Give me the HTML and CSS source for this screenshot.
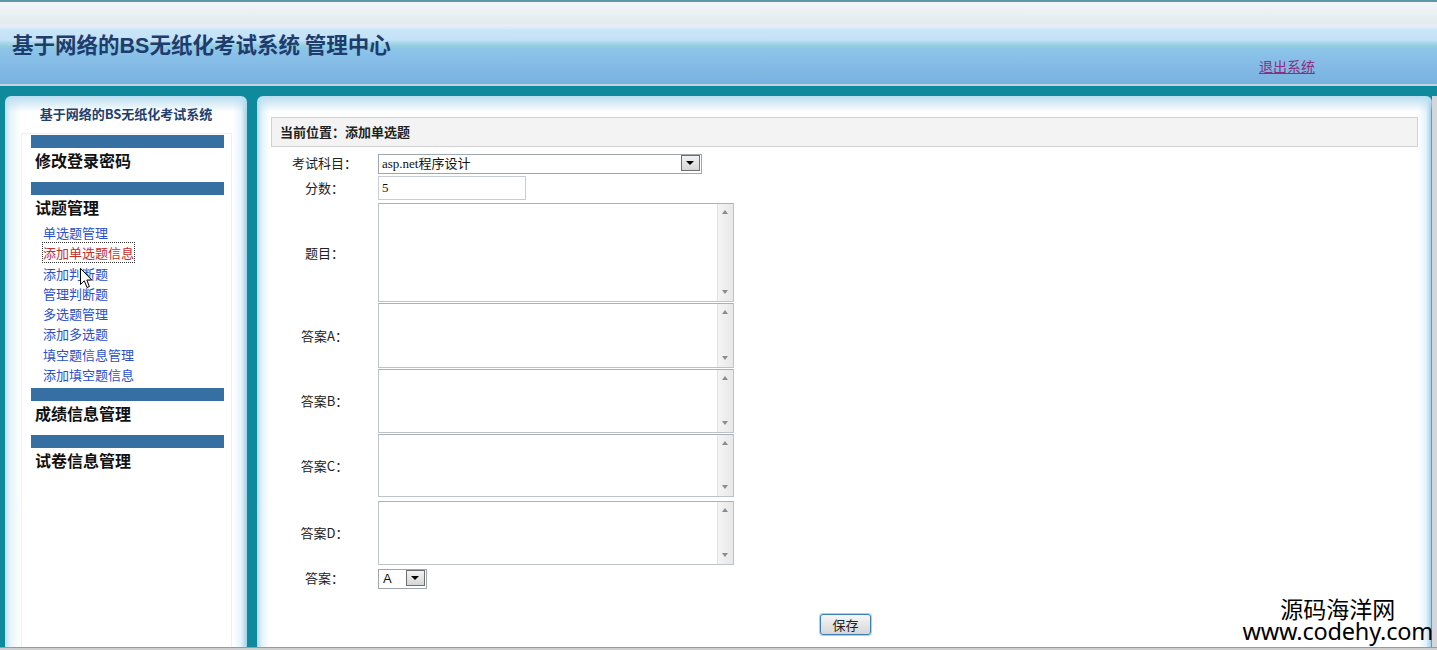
FILE: index.html
```html
<!DOCTYPE html>
<html lang="zh-CN">
<head>
<meta charset="utf-8">
<title>基于网络的BS无纸化考试系统 管理中心</title>
<link rel="stylesheet" href="styles.css">
</head>
<body>
<div class="page">
  <header class="top">
    <h1 class="brand">基于网络的<span class="bs">BS</span>无纸化考试系统 管理中心</h1>
    <div class="top-links"><a href="#" class="logout">退出系统</a></div>
  </header>

  <div class="panels">
    <aside class="side">
      <div class="side-title">基于网络的BS无纸化考试系统</div>
      <nav class="side-body">
        <div class="menu-bar"></div>
        <div class="menu-head">修改登录密码</div>
        <div class="menu-gap"></div>

        <div class="menu-bar"></div>
        <div class="menu-head">试题管理</div>
        <ul class="menu-sub">
          <li><a href="#">单选题管理</a></li>
          <li><a href="#" class="current">添加单选题信息</a></li>
          <li><a href="#">添加判断题</a></li>
          <li><a href="#">管理判断题</a></li>
          <li><a href="#">多选题管理</a></li>
          <li><a href="#">添加多选题</a></li>
          <li><a href="#">填空题信息管理</a></li>
          <li><a href="#">添加填空题信息</a></li>
        </ul>

        <div class="menu-bar"></div>
        <div class="menu-head">成绩信息管理</div>
        <div class="menu-gap"></div>

        <div class="menu-bar"></div>
        <div class="menu-head">试卷信息管理</div>
      </nav>
      <svg class="cursor" width="13" height="21" viewBox="0 0 13 21">
        <path d="M0.5 0.5 L0.5 16.5 L4.3 12.8 L7 19.5 L9.4 18.5 L6.8 12 L11.8 12 Z" fill="#fff" stroke="#000" stroke-width="1"/>
      </svg>
    </aside>

    <main class="main">
      <div class="crumb">当前位置：添加单选题</div>
      <form class="qform">
        <div class="row">
          <label class="lbl">考试科目：</label>
          <div class="field">
            <span class="sel sel-wide"><select><option>asp.net程序设计</option></select></span>
          </div>
        </div>
        <div class="row">
          <label class="lbl">分数：</label>
          <div class="field"><input class="txt" type="text" value="5"></div>
        </div>
        <div class="row row-q">
          <label class="lbl">题目：</label>
          <div class="field"><div class="area-box"><textarea class="area area-q"></textarea><span class="vscroll"></span></div></div>
        </div>
        <div class="row row-opt">
          <label class="lbl">答案A：</label>
          <div class="field"><div class="area-box"><textarea class="area area-a"></textarea><span class="vscroll"></span></div></div>
        </div>
        <div class="row row-opt">
          <label class="lbl">答案B：</label>
          <div class="field"><div class="area-box"><textarea class="area area-b"></textarea><span class="vscroll"></span></div></div>
        </div>
        <div class="row row-opt">
          <label class="lbl">答案C：</label>
          <div class="field"><div class="area-box"><textarea class="area area-c"></textarea><span class="vscroll"></span></div></div>
        </div>
        <div class="row row-d">
          <label class="lbl">答案D：</label>
          <div class="field"><div class="area-box"><textarea class="area area-d"></textarea><span class="vscroll"></span></div></div>
        </div>
        <div class="row">
          <label class="lbl">答案：</label>
          <div class="field">
            <span class="sel sel-small"><select><option>A</option><option>B</option><option>C</option><option>D</option></select></span>
          </div>
        </div>
        <div class="actions"><button type="button" class="btn">保存</button></div>
      </form>
    </main>
    <div class="edge"></div>
  </div>
  <div class="foot-line"></div>

  <div class="watermark">
    <div class="wm-cn">源码海洋网</div>
    <div class="wm-url">www.codehy.com</div>
  </div>
</div>
</body>
</html>
```

FILE: styles.css
```css
html, body {
  margin: 0;
  padding: 0;
}
body {
  background: #0f8a9c;
  font-family: "Noto Sans CJK SC", "Noto Sans", sans-serif;
  font-size: 13px;
  color: #222;
}
.page {
  position: relative;
  width: 1437px;
  height: 650px;
  overflow: hidden;
  display: flex;
  flex-direction: column;
}

/* ---------- header ---------- */
.top {
  box-sizing: border-box;
  height: 86px;
  border-top: 2px solid #5a97a8;
  padding-top: 29px;
  background: linear-gradient(to bottom,
    #f2f6f9 0, #e2eaee 22px, #ecedf6 23px, #d9ecf8 26px, #c9e5f8 28px,
    #c4e2f6 38px, #a9d4ea 41px, #92cedc 44px, #8cc4ea 47px,
    #79b1e0 82px, #c4d4dc 82px, #c4d4dc 84px);
}
.brand {
  margin: 0;
  padding-left: 12px;
  font-size: 21.5px;
  line-height: 26px;
  font-weight: bold;
  color: #1e3c6c;
}
.bs {
  font-family: "Liberation Sans", sans-serif;
  font-weight: bold;
}
.top-links {
  margin-top: -2px;
  line-height: 18px;
  text-align: right;
  padding-right: 122px;
}
.logout {
  font-size: 14px;
  color: #8c2f84;
  text-decoration: underline;
}

/* ---------- panels ---------- */
.panels {
  display: flex;
  padding: 10px 0 0 5px;
  box-sizing: border-box;
  height: 561px;
}
.side {
  position: relative;
  width: 242px;
  flex: none;
  border-radius: 6px 6px 0 0;
  background:
    linear-gradient(to bottom, #b9ddf0 0, rgba(255,255,255,0) 16px),
    linear-gradient(to right, #bfe0f2 0, #e6f4fb 5px, #fbfdfe 14px, #fff 17px,
      #fff calc(100% - 14px), #e6f4fb calc(100% - 6px), #a3d0ea 100%);
  margin-right: 10px;
}
.side-title {
  padding-top: 9px;
  height: 28px;
  line-height: 18px;
  text-align: center;
  font-size: 13px;
  font-weight: bold;
  color: #22406e;
}
.side-body {
  box-sizing: border-box;
  margin: 0 15px 0 16px;
  height: calc(100% - 37px);
  border: 1px solid #e9f2f7;
  border-bottom: none;
  background: #fff;
  padding: 1px 7px 0 9px;
}
.menu-bar {
  height: 13px;
  background: #3670a2;
}
.menu-head {
  height: 24px;
  line-height: 24px;
  padding-left: 4px;
  font-size: 16px;
  font-weight: bold;
  color: #111;
}
.menu-gap {
  height: 10px;
}
.menu-sub {
  list-style: none;
  margin: 0;
  padding: 4px 0 3px 12px;
}
.menu-sub li {
  line-height: 20.3px;
  height: 20.3px;
}
.menu-sub a {
  font-size: 13px;
  color: #2a50c8;
  text-decoration: none;
}
.menu-sub a.current {
  color: #c0302c;
  outline: 1px dotted #333;
  outline-offset: 0;
}
.cursor {
  position: absolute;
  left: 75px;
  top: 172px;
}

.main {
  position: relative;
  flex: none;
  width: 1175px;
  box-sizing: border-box;
  padding: 21px 14px 0 14px;
  border-radius: 6px 6px 0 0;
  background:
    linear-gradient(to bottom, #b9ddf0 0, rgba(255,255,255,0) 16px),
    linear-gradient(to right, #b3d9ee 0, #e4f3fa 5px, #fcfeff 12px, #fff 14px,
      #fff calc(100% - 14px), #e4f3fa calc(100% - 6px), #a3d0ea calc(100% - 1px), #0e7080 100%);
}
.edge {
  flex: 1;
  background: #d3d7da;
}
.foot-line {
  height: 2px;
  border-top: 1px solid #9a9a9a;
  background: #cfcfcf;
}

/* ---------- breadcrumb ---------- */
.crumb {
  box-sizing: border-box;
  height: 30px;
  line-height: 28px;
  padding-left: 8px;
  background: #f3f3f3;
  border: 1px solid #d2d2d2;
  font-size: 13px;
  font-weight: bold;
  color: #222;
}

/* ---------- form ---------- */
.qform {
  padding-top: 4.5px;
}
.row {
  display: grid;
  grid-template-columns: 107px auto;
  align-items: center;
  padding: 1.5px 0;
}
.row-q {
  padding: 1.5px 0 0.5px;
}
.row-opt {
  padding: 0.5px 0;
}
.row-d {
  padding: 3px 0 1.5px;
}
.lbl {
  text-align: center;
  font-size: 13px;
  color: #222;
  line-height: 16px;
}
.field {
  display: flex;
  align-items: center;
}

.sel {
  position: relative;
  display: inline-block;
  height: 20px;
}
.sel select {
  appearance: none;
  -webkit-appearance: none;
  box-sizing: border-box;
  width: 100%;
  height: 20px;
  margin: 0;
  padding: 0 0 0 3px;
  border: 1px solid #9ea6ae;
  border-radius: 0;
  background: #fff;
  font-family: "Liberation Serif", "Noto Sans CJK SC", serif;
  font-size: 13px;
  color: #111;
  line-height: 18px;
}
.sel::after {
  content: "";
  position: absolute;
  right: 2px;
  top: 2px;
  width: 17px;
  height: 14px;
  border: 1px solid #6f6f6f;
  background: linear-gradient(to bottom, #f2f2f2, #d6d6d6);
  pointer-events: none;
}
.sel::before {
  content: "";
  position: absolute;
  right: 8px;
  top: 8px;
  width: 0;
  height: 0;
  border-left: 4px solid transparent;
  border-right: 4px solid transparent;
  border-top: 4px solid #000;
  z-index: 1;
  pointer-events: none;
}
.sel-wide { width: 324px; }
.sel-small { width: 49px; }
.sel-small select {
  font-family: "Liberation Sans", sans-serif;
  padding-left: 4px;
}

.txt {
  box-sizing: border-box;
  width: 148px;
  height: 24px;
  margin: 0;
  padding: 0 3px;
  border: 1px solid #c6ccd2;
  font-family: "Liberation Serif", serif;
  font-size: 13px;
  color: #111;
}

.area-box {
  position: relative;
  width: 356px;
}
.area {
  box-sizing: border-box;
  display: block;
  width: 356px;
  margin: 0;
  padding: 2px 20px 2px 2px;
  border: 1px solid #bcc3ca;
  border-top-color: #a9b2bb;
  resize: none;
  overflow: hidden;
  background: #fff;
  font-size: 13px;
}
.vscroll {
  position: absolute;
  right: 1px;
  top: 1px;
  bottom: 1px;
  width: 16px;
  box-sizing: border-box;
  border-left: 1px solid #e2e2e2;
  background: linear-gradient(to right, #f4f4f4, #e8e8e8);
}
.vscroll::before,
.vscroll::after {
  content: "";
  position: absolute;
  left: 4px;
  width: 0;
  height: 0;
  border-left: 3.5px solid transparent;
  border-right: 3.5px solid transparent;
}
.vscroll::before {
  top: 6px;
  border-bottom: 4px solid #8c8c8c;
}
.vscroll::after {
  bottom: 7px;
  border-top: 4px solid #8c8c8c;
}
.area-q { height: 99px; }
.area-a { height: 65px; }
.area-b { height: 64px; }
.area-c { height: 63px; }
.area-d { height: 64px; }

.actions {
  margin-top: 25px;
  text-align: center;
}
.btn {
  box-sizing: border-box;
  width: 51px;
  height: 21px;
  margin-left: 2px;
  padding: 0;
  border: 1px solid #3c7fb1;
  border-radius: 3px;
  background: linear-gradient(to bottom, #f6f6f6 0, #e6e6e6 50%, #d6d6d6 100%);
  box-shadow: 0 0 0 1px #a6d4ee;
  font-family: "Noto Sans CJK SC", sans-serif;
  font-size: 13px;
  line-height: 19px;
  color: #222;
}

/* ---------- watermark ---------- */
.watermark {
  position: absolute;
  right: 4px;
  bottom: 7px;
  text-align: center;
  color: #000;
}
.wm-cn {
  font-family: "Noto Sans CJK SC", sans-serif;
  font-size: 23px;
  line-height: 23px;
}
.wm-url {
  font-family: "Noto Sans", sans-serif;
  font-size: 23.5px;
  line-height: 23px;
  letter-spacing: -0.2px;
}
```
